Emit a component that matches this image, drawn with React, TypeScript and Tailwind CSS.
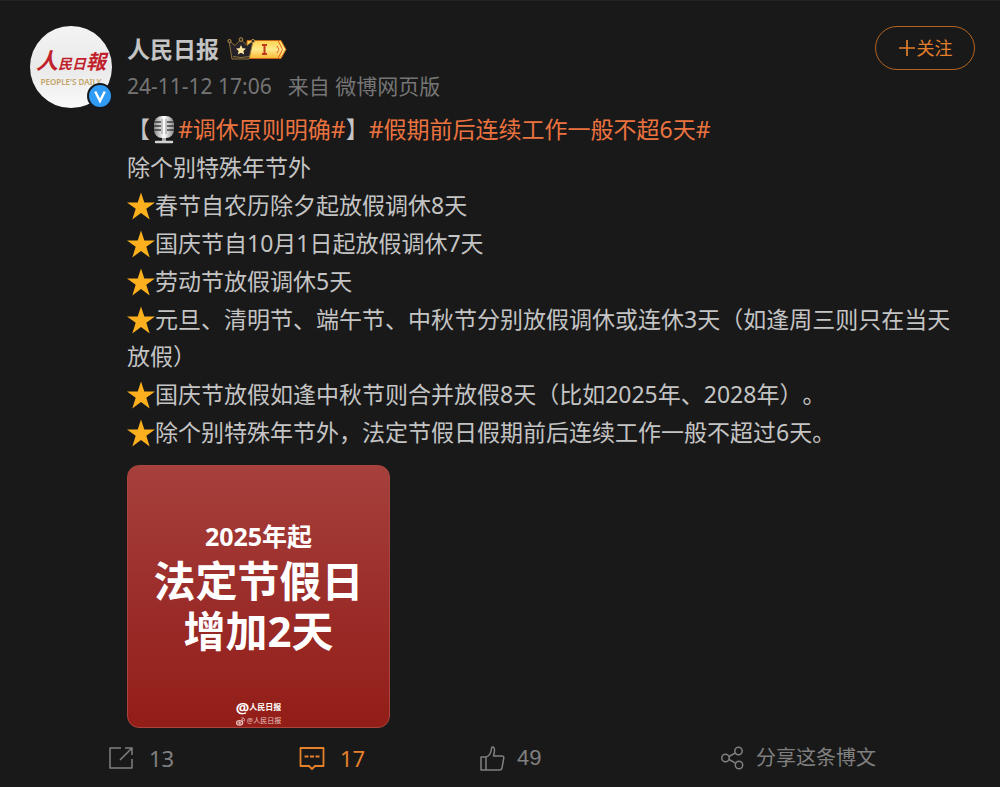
import type { ReactNode } from "react";

type Line = { star: boolean; text: string };

const lines: Line[] = [
  { star: false, text: "除个别特殊年节外" },
  { star: true, text: "春节自农历除夕起放假调休8天" },
  { star: true, text: "国庆节自10月1日起放假调休7天" },
  { star: true, text: "劳动节放假调休5天" },
  { star: true, text: "元旦、清明节、端午节、中秋节分别放假调休或连休3天（如逢周三则只在当天放假）" },
  { star: true, text: "国庆节放假如逢中秋节则合并放假8天（比如2025年、2028年）。" },
  { star: true, text: "除个别特殊年节外，法定节假日假期前后连续工作一般不超过6天。" },
];

function Avatar() {
  return (
    <a href="#profile" aria-label="人民日报" className="relative block size-[82px] shrink-0">
      <span className="flex size-full flex-col items-center justify-center rounded-full bg-linear-to-b from-[#f4f4f4] via-[#e9e9e9] to-[#fafafa]">
        <span className="flex items-baseline font-bold italic leading-7 text-[#c11f2b]">
          <span className="text-[22px]">人</span>
          <span className="text-sm">民日</span>
          <span className="text-xl">報</span>
        </span>
        <span className="text-[8px] font-semibold leading-3 whitespace-nowrap text-[#c2a468]">PEOPLE&apos;S DAILY</span>
      </span>
      <svg viewBox="0 0 26 26" className="absolute -right-px -bottom-px size-[26px]" aria-hidden="true">
        <circle cx="13" cy="13" r="12" fill="#2f9bf4" stroke="#15191e" strokeWidth="2" />
        <path d="M8.2 8.5 13 18l4.8-9.5" fill="none" stroke="#fff" strokeWidth="2.4" />
      </svg>
    </a>
  );
}

function VipBadge() {
  return (
    <svg viewBox="0 0 60 24" className="h-6 w-[60px]" aria-hidden="true">
      <defs>
        <linearGradient id="vip-gold" x1="0" y1="0" x2="0" y2="1">
          <stop offset="0" stopColor="#ffd24d" />
          <stop offset="0.5" stopColor="#ffe98c" />
          <stop offset="1" stopColor="#f8b832" />
        </linearGradient>
      </defs>
      <path d="M20 3.5h34l5 9-5 9H20z" fill="url(#vip-gold)" stroke="#c8661b" strokeWidth="1" />
      <path d="m51 3.5 4.500 9-4.500 9M50 9l2 3.500-2 3.500" fill="none" stroke="#e2622a" strokeWidth="1" />
      <path d="M35 8h5M37.500 8v9M35 17h5" fill="none" stroke="#c1391c" strokeWidth="2" />
      <path
        d="m2 4 6 4.500 6-6 6 6L26 4l-4 18H5z"
        fill="#25222a"
        stroke="#8f7339"
        strokeWidth="1"
        strokeLinejoin="round"
      />
      <circle cx="2.500" cy="4" r="1.600" fill="#292522" stroke="#b8934a" />
      <circle cx="14" cy="2.500" r="1.800" fill="#292522" stroke="#b8934a" />
      <circle cx="26" cy="4" r="1.600" fill="#292522" stroke="#b8934a" />
      <path d="m14 8 1.500 3.200 3.500.4-2.600 2.300.8 3.500-3.200-1.700-3.200 1.700.8-3.500L9 11.600l3.500-.4z" fill="#ffe9a3" />
      <path d="M6 19.500q8 2 16 0" fill="none" stroke="#8f7339" />
    </svg>
  );
}

function Microphone() {
  return (
    <svg viewBox="0 0 24 28" className="mx-[2px] inline-block h-7 w-6 align-[-6px]" aria-hidden="true">
      <defs>
        <linearGradient id="mic-silver" x1="0" y1="0" x2="1" y2="0">
          <stop offset="0" stopColor="#8b8b8b" />
          <stop offset="0.5" stopColor="#fff" />
          <stop offset="1" stopColor="#8b8b8b" />
        </linearGradient>
      </defs>
      <rect x="2" y="0" width="20" height="22" rx="8" fill="url(#mic-silver)" />
      <path d="M2 6h7M2 10h7M2 14h7M15 6h7M15 10h7M15 14h7" stroke="#3e3e3e" strokeWidth="1.300" />
      <path d="M10 3v15M14 3v15" stroke="#888" strokeWidth="0.800" />
      <path d="M12 22v4" stroke="#aaa" strokeWidth="4" />
      <path d="M4 26h16" stroke="#d2d2d2" strokeWidth="2.500" strokeLinecap="round" />
    </svg>
  );
}

function Star() {
  return (
    <svg viewBox="0 0 28 28" className="inline-block size-7 align-[-6px]" aria-hidden="true">
      <path d="m14 .5 3.300 10H28l-8.700 6.300 3.400 10.700-8.700-6.500-8.700 6.500 3.400-10.700L0 10.500h10.700z" fill="#fdb01e" />
    </svg>
  );
}

function ActionIcon({ children }: { children: ReactNode }) {
  return (
    <svg
      viewBox="0 0 26 26"
      className="size-[26px] shrink-0"
      fill="none"
      stroke="currentColor"
      strokeWidth="1.500"
      strokeLinejoin="round"
      aria-hidden="true"
    >
      {children}
    </svg>
  );
}

function Poster() {
  return (
    <figure className="mt-[14px] flex size-[263px] flex-col items-center rounded-xl border border-[#a8453f] bg-linear-to-b from-[#a6403c] via-[#9b2d2a] to-[#931d17] pt-[54px] text-center font-bold text-white">
      <p className="text-[25px] leading-8">2025年起</p>
      <p className="mt-1 text-[42px] leading-[50px]">
        法定节假日
        <br />
        增加2天
      </p>
      <figcaption className="mt-auto flex flex-col items-center">
        <span className="flex items-center leading-4">
          <span className="text-[15px]">@</span>
          <span className="text-[8px]">人民日报</span>
        </span>
        <span className="flex items-center gap-[2px] text-[7px] font-normal leading-3 text-[#e8c3c0]">
          <svg viewBox="0 0 10 10" className="size-[9px]" fill="none" stroke="currentColor" aria-hidden="true">
            <ellipse cx="4" cy="6.500" rx="3.400" ry="2.500" strokeWidth="1.400" />
            <circle cx="4" cy="6.500" r="1" fill="currentColor" />
            <path d="M6 3q2-.5 2 1.500M6 1q4-.5 4 4" />
          </svg>
          @人民日报
        </span>
      </figcaption>
    </figure>
  );
}

export default function App() {
  return (
    <main className="min-h-screen border-t border-[#222] bg-[#191919] font-['Noto_Sans','Noto_Sans_CJK_SC',sans-serif] text-[#c4c4c4] [text-spacing-trim:space-all]">
      <article>
        <header className="flex gap-[15px] pt-[25px] pr-[25px] pl-[30px]">
          <Avatar />
          <div className="min-w-0 flex-1">
            <div className="flex h-[46px] items-center gap-2">
              <a href="#profile" className="text-[23px] font-bold leading-8">
                人民日报
              </a>
              <VipBadge />
            </div>
            <p className="flex gap-4 text-[21px] leading-7 text-[#757575]">
              <time dateTime="2024-11-12T17:06">24-11-12 17:06</time>
              <span>来自 微博网页版</span>
            </p>
          </div>
          <button
            type="button"
            className="flex h-11 w-[100px] shrink-0 items-center justify-center gap-px rounded-full border border-[#b4641f] text-lg text-[#e27f2c]"
          >
            <svg viewBox="0 0 18 18" className="size-[18px]" stroke="currentColor" strokeWidth="1.700" aria-hidden="true">
              <path d="M9 1v16M1 9h16" />
            </svg>
            关注
          </button>
        </header>

        <div className="mt-[3px] pr-8 pl-[127px]">
          <div className="flex flex-col gap-px text-[23px] leading-[37px]">
            <p>
              【<Microphone />
              <a href="#topic-1" className="text-[#eb7340]">#调休原则明确#</a>】
              <a href="#topic-2" className="text-[#eb7340]">#假期前后连续工作一般不超6天#</a>
            </p>
            {lines.map((line) => (
              <p key={line.text}>
                {line.star && <Star />}
                {line.text}
              </p>
            ))}
          </div>
          <Poster />
        </div>

        <footer className="grid grid-cols-[191fr_180fr_241fr_280fr] pt-4 pb-[14px] pl-[108px] text-[22px] leading-7 text-[#808080]">
          <button type="button" aria-label="转发 13" className="flex items-center gap-[15px]">
            <ActionIcon>
              <path d="M13 3H2v20h22V14M12 15 24 3M17 3h7v7" />
            </ActionIcon>
            13
          </button>
          <button type="button" aria-label="评论 17" className="flex items-center gap-[15px] text-[#e5812b]">
            <ActionIcon>
              <path d="M1.500 3h23v18H16l-3 3-3-3H1.500z" strokeWidth="1.800" />
              <path d="M5.500 11.500h4M11 11.500h4M16.500 11.500h4" strokeWidth="1.800" />
            </ActionIcon>
            17
          </button>
          <button type="button" aria-label="赞 49" className="flex items-center gap-3 font-['Liberation_Sans',sans-serif]">
            <ActionIcon>
              <path d="M2 12h5v13H2zM7 12c4-1 5-4 5.500-8.500C12.700 1 15.500 1.500 15.500 5c0 2-.5 4-1 6H23c1.500 0 2 1 1.700 2.500L23 23c-.3 1.500-1 2-2.500 2H7" />
            </ActionIcon>
            49
          </button>
          <button type="button" className="flex items-center gap-[10px] text-xl">
            <ActionIcon>
              <circle cx="5.500" cy="13" r="3.700" />
              <circle cx="18.500" cy="6" r="3.700" />
              <circle cx="19" cy="20" r="3.700" />
              <path d="m9 11.500 6.500-3.700M9 14.500l6.500 3.700" />
            </ActionIcon>
            分享这条博文
          </button>
        </footer>
      </article>
    </main>
  );
}
